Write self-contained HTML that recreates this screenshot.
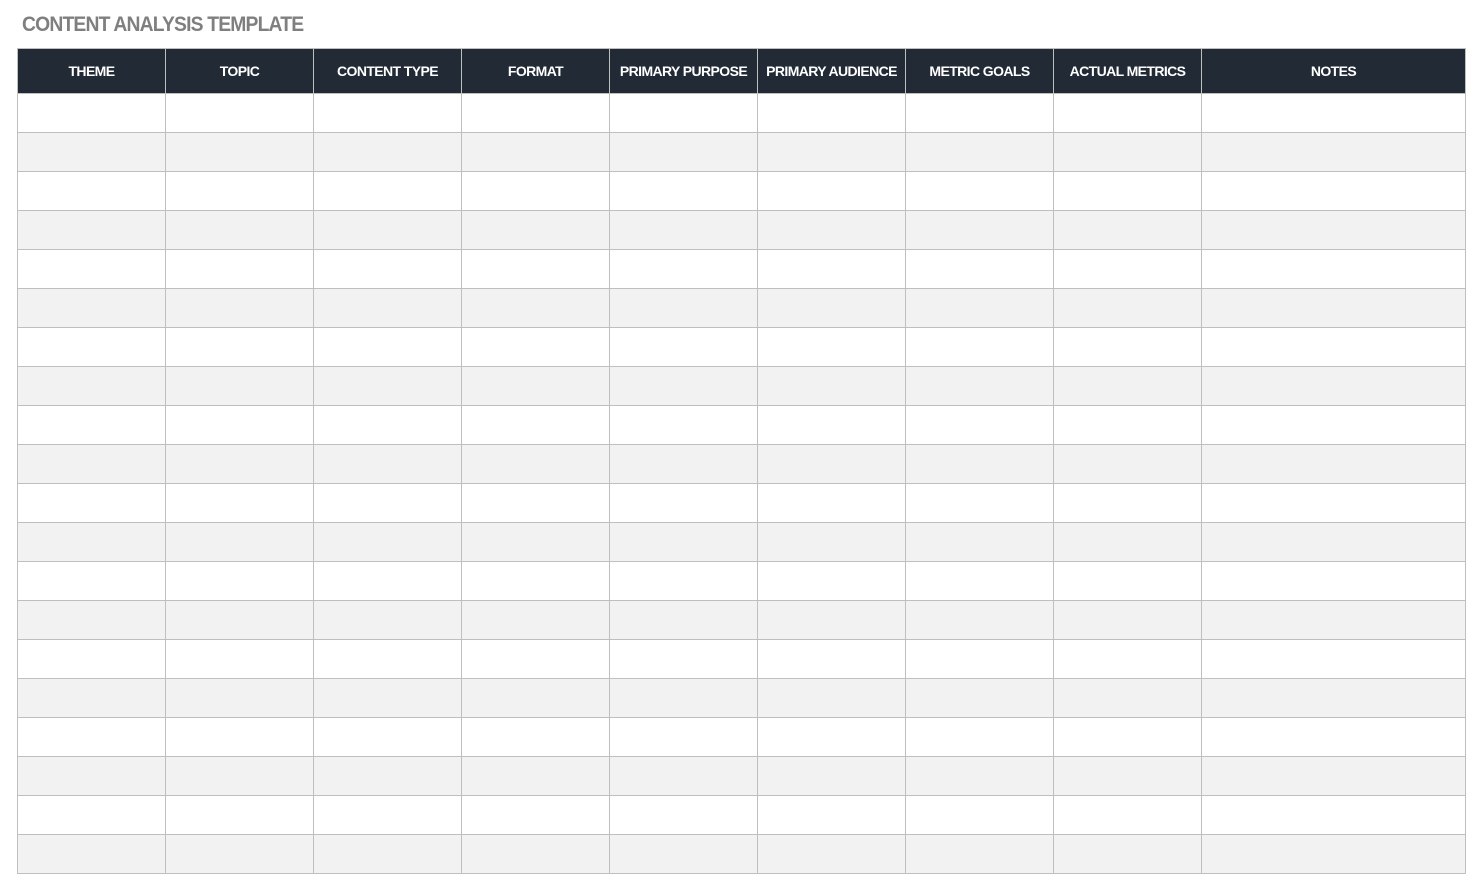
<!DOCTYPE html>
<html><head><meta charset="utf-8"><style>
*{margin:0;padding:0;box-sizing:border-box}
body{width:1484px;height:888px;background:#fff;position:relative;overflow:hidden;font-family:"Liberation Sans",Arial,sans-serif}
.title{position:absolute;left:22px;top:13px;font-size:21px;font-weight:bold;color:#7f7f7f;white-space:nowrap;letter-spacing:-0.9px;transform-origin:left;transform:scaleX(0.92)}
table{position:absolute;left:17px;top:48px;border-collapse:collapse;table-layout:fixed}
th{background:#222a36;color:#fff;font-size:14px;font-weight:bold;height:45px;border:1px solid #bfbfbf;letter-spacing:-0.6px;white-space:nowrap;overflow:hidden}
td{height:39px;border:1px solid #bfbfbf}
tbody tr:nth-child(odd) td{background:#fff}tbody tr:nth-child(even) td{background:#f2f2f2}
</style></head><body>
<div class="title">CONTENT ANALYSIS TEMPLATE</div>
<table>
<colgroup><col style="width:148px"><col style="width:148px"><col style="width:148px"><col style="width:148px"><col style="width:148px"><col style="width:148px"><col style="width:148px"><col style="width:148px"><col style="width:264px"></colgroup>
<thead><tr><th>THEME</th><th>TOPIC</th><th>CONTENT TYPE</th><th>FORMAT</th><th>PRIMARY PURPOSE</th><th>PRIMARY AUDIENCE</th><th>METRIC GOALS</th><th>ACTUAL METRICS</th><th>NOTES</th></tr></thead>
<tbody>
<tr><td></td><td></td><td></td><td></td><td></td><td></td><td></td><td></td><td></td></tr>
<tr><td></td><td></td><td></td><td></td><td></td><td></td><td></td><td></td><td></td></tr>
<tr><td></td><td></td><td></td><td></td><td></td><td></td><td></td><td></td><td></td></tr>
<tr><td></td><td></td><td></td><td></td><td></td><td></td><td></td><td></td><td></td></tr>
<tr><td></td><td></td><td></td><td></td><td></td><td></td><td></td><td></td><td></td></tr>
<tr><td></td><td></td><td></td><td></td><td></td><td></td><td></td><td></td><td></td></tr>
<tr><td></td><td></td><td></td><td></td><td></td><td></td><td></td><td></td><td></td></tr>
<tr><td></td><td></td><td></td><td></td><td></td><td></td><td></td><td></td><td></td></tr>
<tr><td></td><td></td><td></td><td></td><td></td><td></td><td></td><td></td><td></td></tr>
<tr><td></td><td></td><td></td><td></td><td></td><td></td><td></td><td></td><td></td></tr>
<tr><td></td><td></td><td></td><td></td><td></td><td></td><td></td><td></td><td></td></tr>
<tr><td></td><td></td><td></td><td></td><td></td><td></td><td></td><td></td><td></td></tr>
<tr><td></td><td></td><td></td><td></td><td></td><td></td><td></td><td></td><td></td></tr>
<tr><td></td><td></td><td></td><td></td><td></td><td></td><td></td><td></td><td></td></tr>
<tr><td></td><td></td><td></td><td></td><td></td><td></td><td></td><td></td><td></td></tr>
<tr><td></td><td></td><td></td><td></td><td></td><td></td><td></td><td></td><td></td></tr>
<tr><td></td><td></td><td></td><td></td><td></td><td></td><td></td><td></td><td></td></tr>
<tr><td></td><td></td><td></td><td></td><td></td><td></td><td></td><td></td><td></td></tr>
<tr><td></td><td></td><td></td><td></td><td></td><td></td><td></td><td></td><td></td></tr>
<tr><td></td><td></td><td></td><td></td><td></td><td></td><td></td><td></td><td></td></tr>
</tbody></table>
</body></html>
